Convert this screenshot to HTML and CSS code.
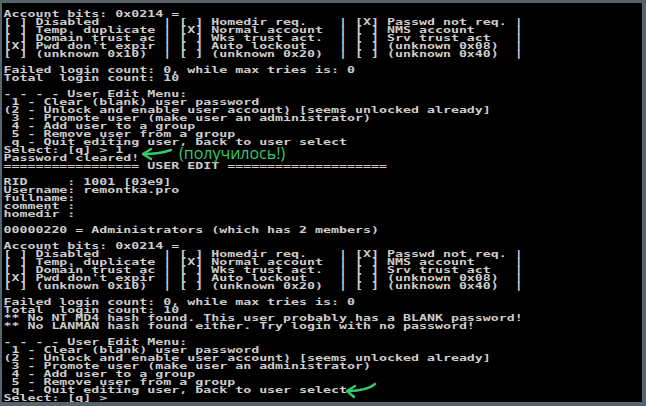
FILE: index.html
```html
<!DOCTYPE html>
<html>
<head>
<meta charset="utf-8">
<link rel="stylesheet" href="styles.css">
</head>
<body>
<div class="frame">
<div class="screen">
<pre class="console">Account bits: 0x0214 =
[ ] Disabled        | [ ] Homedir req.    | [X] Passwd not req. |
[ ] Temp. duplicate | [X] Normal account  | [ ] NMS account     |
[ ] Domain trust ac | [ ] Wks trust act.  | [ ] Srv trust act   |
[X] Pwd don't expir | [ ] Auto lockout    | [ ] (unknown 0x08)  |
[ ] (unknown 0x10)  | [ ] (unknown 0x20)  | [ ] (unknown 0x40)  |

Failed login count: 0, while max tries is: 0
Total  login count: 10

- - - - User Edit Menu:
 1 - Clear (blank) user password
(2 - Unlock and enable user account) [seems unlocked already]
 3 - Promote user (make user an administrator)
 4 - Add user to a group
 5 - Remove user from a group
 q - Quit editing user, back to user select
Select: [q] &gt; 1
Password cleared!
================= USER EDIT ====================

RID     : 1001 [03e9]
Username: remontka.pro
fullname:
comment :
homedir :

00000220 = Administrators (which has 2 members)

Account bits: 0x0214 =
[ ] Disabled        | [ ] Homedir req.    | [X] Passwd not req. |
[ ] Temp. duplicate | [X] Normal account  | [ ] NMS account     |
[ ] Domain trust ac | [ ] Wks trust act.  | [ ] Srv trust act   |
[X] Pwd don't expir | [ ] Auto lockout    | [ ] (unknown 0x08)  |
[ ] (unknown 0x10)  | [ ] (unknown 0x20)  | [ ] (unknown 0x40)  |

Failed login count: 0, while max tries is: 0
Total  login count: 10
** No NT MD4 hash found. This user probably has a BLANK password!
** No LANMAN hash found either. Try login with no password!

- - - - User Edit Menu:
 1 - Clear (blank) user password
(2 - Unlock and enable user account) [seems unlocked already]
 3 - Promote user (make user an administrator)
 4 - Add user to a group
 5 - Remove user from a group
 q - Quit editing user, back to user select
Select: [q] &gt; _</pre>
<div class="note note-top">
<svg class="arrow" width="36" height="16" viewBox="0 0 36 16"><path d="M31 5 Q20 9 4 9" fill="none" stroke="#34c96b" stroke-width="2.4" stroke-linecap="round"/><path d="M11 4 L3 9 L11 14" fill="none" stroke="#34c96b" stroke-width="2.4" stroke-linecap="round" stroke-linejoin="round"/></svg>
<span class="note-text">(получилось!)</span>
</div>
<svg class="arrow arrow-bottom" width="36" height="20" viewBox="0 0 36 20"><path d="M32 3 Q24 10 5 10" fill="none" stroke="#34c96b" stroke-width="2.4" stroke-linecap="round"/><path d="M12 5 L4 10 L11 16" fill="none" stroke="#34c96b" stroke-width="2.4" stroke-linecap="round" stroke-linejoin="round"/></svg>
</div>
</div>
</body>
</html>
```
FILE: styles.css
```css
html, body {
  margin: 0;
  padding: 0;
}
body {
  width: 646px;
  height: 406px;
  overflow: hidden;
  background: #56636b;
}
.frame {
  box-sizing: border-box;
  width: 646px;
  height: 406px;
  padding: 3px 4px 4px 2px;
  background: #56636b;
}
.screen {
  position: relative;
  height: 100%;
  background: #000;
  overflow: hidden;
  padding-top: 7px;
  box-sizing: border-box;
}
.console {
  margin: 0;
  padding-left: 1px;
  font-family: "DejaVu Sans Mono", "Liberation Mono", monospace;
  font-weight: bold;
  font-size: 9.2px;
  line-height: 8px;
  color: #cdcdcd;
  white-space: pre;
  transform: scaleX(1.4445);
  transform-origin: 0 0;
}
.note {
  position: absolute;
  left: 138px;
  top: 142px;
  display: flex;
  align-items: center;
  gap: 3px;
}
.note-text {
  font-family: "Open Sans", "Noto Sans", sans-serif;
  font-size: 16px;
  line-height: 8px;
  color: #34c96b;
}
.arrow-bottom {
  position: absolute;
  left: 341px;
  top: 378px;
}
```
